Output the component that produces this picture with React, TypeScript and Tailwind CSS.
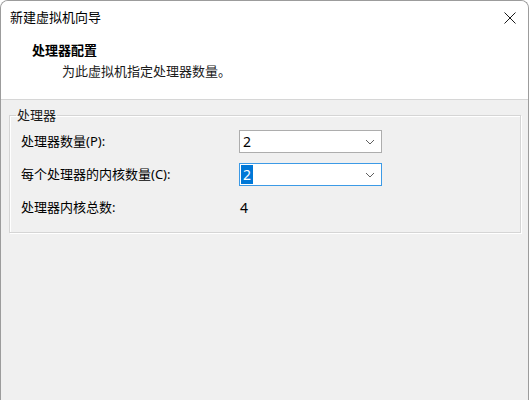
import React from "react";

const Combo: React.FC<{ value: string; focused?: boolean }> = ({
  value,
  focused,
}) => (
  <div
    className={`flex items-center justify-between w-[143px] h-[23px] bg-white border pl-[1px] pr-[6px] ${
      focused ? "border-[#3c9ae6]" : "border-[#adadad]"
    }`}
  >
    <span
      className={`h-[19px] leading-[19px] px-[2px] text-[14px] ${
        focused ? "bg-[#0078d7] text-white" : "text-black"
      }`}
    >
      {value}
    </span>
    <svg width="10" height="6" viewBox="0 0 10 6" className="text-[#606060]">
      <path d="M1 1 L5 5 L9 1" fill="none" stroke="currentColor" strokeWidth="1" />
    </svg>
  </div>
);

export default function App() {
  const rows = [
    { label: "处理器数量(P):", control: <Combo value="2" /> },
    { label: "每个处理器的内核数量(C):", control: <Combo value="2" focused /> },
    { label: "处理器内核总数:", control: <span className="pl-[1px] text-[14px]">4</span> },
  ];

  return (
    <div
      className="w-[530px] h-[400px] overflow-hidden bg-white"
      style={{ fontFamily: '"Noto Sans", "Noto Sans CJK SC", sans-serif' }}
    >
      <div className="w-[529px] h-[400px] flex flex-col bg-[#f0f0f0] border border-b-0 border-[#9c9c9c] rounded-t-[8px] overflow-hidden">
        {/* header */}
        <div className="h-[99px] bg-white border-b border-[#d6d6d6] shrink-0">
          <div className="flex items-center justify-between h-[33px] pl-[9px] pr-[12px]">
            <span className="text-[13px] text-black">新建虚拟机向导</span>
            <svg width="12" height="12" viewBox="0 0 12 12">
              <path d="M0.5 0.5 L11.5 11.5 M11.5 0.5 L0.5 11.5" stroke="#1a1a1a" strokeWidth="1" />
            </svg>
          </div>
          <div className="pl-[31px] pt-[6px] text-[13px] font-bold text-black leading-[20px]">
            处理器配置
          </div>
          <div className="pl-[61px] pt-[1px] text-[13px] text-[#1a1a1a] leading-[20px]">
            为此虚拟机指定处理器数量。
          </div>
        </div>

        {/* processor group */}
        <fieldset className="mt-[6px] ml-[8px] w-[512px] border border-[#d5d5d5] shadow-[inset_1px_1px_0_#fff,1px_1px_0_#fff] pl-[11px] pb-[8px]">
          <legend className="ml-[-5px] px-[1px] text-[13px] text-[#1a1a1a] leading-[18px]">
            处理器
          </legend>
          <div className="grid grid-cols-[218px_143px] pt-[1px]">
            {rows.map((r) => (
              <React.Fragment key={r.label}>
                <div className="h-[33px] flex items-center text-[13px] text-black">
                  {r.label}
                </div>
                <div className="h-[33px] flex items-center">{r.control}</div>
              </React.Fragment>
            ))}
          </div>
        </fieldset>
      </div>
    </div>
  );
}
